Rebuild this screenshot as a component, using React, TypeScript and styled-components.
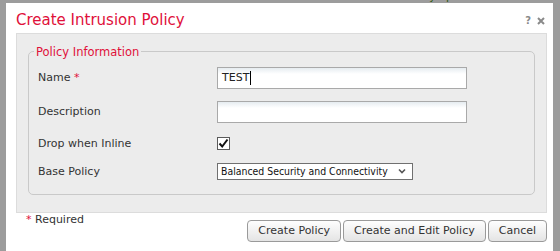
import styled, { createGlobalStyle } from "styled-components";

const GlobalStyle = createGlobalStyle`
  html, body {
    margin: 0;
    padding: 0;
    background-color: #9c9c9c;
    overflow: hidden;
  }
  body {
    font-family: "DejaVu Sans", Verdana, sans-serif;
  }
`;

const Page = styled.div`
  display: flex;
  flex-direction: column;
  width: 560px;
  height: 251px;
  padding: 0 7px 0 6px;
  box-sizing: border-box;
`;

const Backdrop = styled.div`
  height: 3px;
  overflow: hidden;
  padding-left: 398px;
`;

const BackdropText = styled.div`
  margin-top: -10px;
  font-size: 11px;
  line-height: 13px;
  color: #2c5a0c;
  white-space: nowrap;
`;

const Dialog = styled.div`
  display: flex;
  flex-direction: column;
  background-color: #ffffff;
  height: 260px;
`;

const Header = styled.div`
  display: flex;
  flex-direction: row;
  justify-content: space-between;
  align-items: flex-start;
  padding: 8px 8px 4px 10px;
`;

const Title = styled.div`
  font-size: 15px;
  line-height: 18px;
  color: #e0103a;
`;

const Tools = styled.div`
  display: flex;
  flex-direction: row;
  align-items: center;
  gap: 6px;
  padding-top: 5px;
  color: #8a8a8a;
`;

const Help = styled.span`
  font-size: 10px;
  font-weight: bold;
  line-height: 10px;
`;

const Panel = styled.div`
  margin: 0 6px 0 10px;
  padding: 11px 11px 17px 11px;
  background-color: #ececec;
  border: 1px solid #dcdcdc;
`;

const Fieldset = styled.fieldset`
  margin: 0;
  padding: 8px 9px 14px 9px;
  border: 1px solid #c9c9c9;
  border-radius: 5px;
`;

const Legend = styled.legend`
  margin-left: -4px;
  padding: 0 2px;
  font-size: 11.5px;
  line-height: 14px;
  color: #e0103a;
`;

const Row = styled.div<{ $top: number }>`
  display: flex;
  flex-direction: row;
  align-items: center;
  margin-top: ${(p) => p.$top}px;
`;

const Label = styled.div`
  width: 179px;
  font-size: 11px;
  color: #333333;
`;

const Star = styled.span`
  color: #e0103a;
`;

const TextBox = styled.div`
  display: flex;
  align-items: center;
  width: 250px;
  height: 22px;
  box-sizing: border-box;
  padding-left: 4px;
  border: 1px solid #a9a9a9;
  background: linear-gradient(#e6ecf0 0px, #ffffff 6px);
  font-size: 11px;
  color: #222222;
`;

const Caret = styled.span`
  display: inline-block;
  width: 1px;
  height: 14px;
  margin-left: 1px;
  background-color: #000000;
`;

const Check = styled.div`
  width: 13px;
  height: 13px;
  box-sizing: border-box;
  border: 1px solid #5a5a5a;
  background-color: #ffffff;
  display: flex;
  align-items: center;
  justify-content: center;
`;

const Select = styled.div`
  display: flex;
  flex-direction: row;
  justify-content: space-between;
  align-items: center;
  width: 196px;
  height: 17px;
  box-sizing: border-box;
  padding: 0 6px 0 3px;
  border: 1px solid #707070;
  background-color: #ffffff;
  font-family: "DejaVu Sans Condensed", "Liberation Sans", sans-serif;
  font-size: 10.4px;
  color: #111111;
  white-space: nowrap;
`;

const Footer = styled.div`
  display: flex;
  flex-direction: row;
  justify-content: space-between;
  align-items: flex-start;
  padding: 0 6px 0 20px;
`;

const Required = styled.div`
  font-size: 11px;
  line-height: 14px;
  color: #333333;
`;

const Buttons = styled.div`
  display: flex;
  flex-direction: row;
  gap: 2px;
  margin-top: 7px;
`;

const Button = styled.div`
  display: flex;
  align-items: center;
  height: 22px;
  box-sizing: border-box;
  padding: 0 10px;
  border: 1px solid #9a9a9a;
  border-radius: 4px;
  background: linear-gradient(#fefefe, #e4e4e4);
  font-size: 11px;
  color: #333333;
`;

const App: React.FC = () => {
  return (
    <>
      <GlobalStyle />
      <Page>
        <Backdrop>
          <BackdropText>Policy up to date on all 3 devices</BackdropText>
        </Backdrop>
        <Dialog>
          <Header>
            <Title>Create Intrusion Policy</Title>
            <Tools>
              <Help>?</Help>
              <svg width="8" height="8" viewBox="0 0 8 8">
                <path d="M1 1 L7 7 M7 1 L1 7" stroke="#8a8a8a" strokeWidth="2" />
              </svg>
            </Tools>
          </Header>
          <Panel>
            <Fieldset>
              <Legend>Policy Information</Legend>
              <Row $top={0}>
                <Label>
                  Name <Star>*</Star>
                </Label>
                <TextBox>
                  TEST
                  <Caret />
                </TextBox>
              </Row>
              <Row $top={12}>
                <Label>Description</Label>
                <TextBox />
              </Row>
              <Row $top={14}>
                <Label>Drop when Inline</Label>
                <Check>
                  <svg width="11" height="11" viewBox="0 0 11 11">
                    <path d="M1.5 5.5 L4.2 8.5 L9.5 1.5" stroke="#111111" strokeWidth="2" fill="none" />
                  </svg>
                </Check>
              </Row>
              <Row $top={13}>
                <Label>Base Policy</Label>
                <Select>
                  <span>Balanced Security and Connectivity</span>
                  <svg width="8" height="6" viewBox="0 0 8 6">
                    <path d="M1 1.5 L4 4.5 L7 1.5" stroke="#555555" strokeWidth="1.6" fill="none" />
                  </svg>
                </Select>
              </Row>
            </Fieldset>
          </Panel>
          <Footer>
            <Required>
              <Star>*</Star> Required
            </Required>
            <Buttons>
              <Button>Create Policy</Button>
              <Button>Create and Edit Policy</Button>
              <Button>Cancel</Button>
            </Buttons>
          </Footer>
        </Dialog>
      </Page>
    </>
  );
};

export default App;
